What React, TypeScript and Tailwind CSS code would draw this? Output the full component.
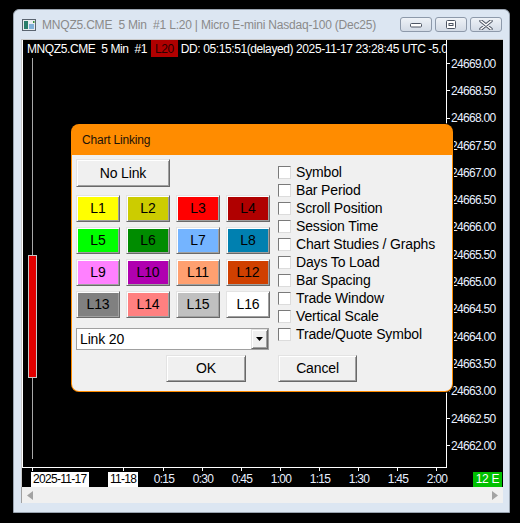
import React from 'react';

const prices = [
  '24669.00', '24668.50', '24668.00', '24667.50', '24667.00',
  '24666.50', '24666.00', '24665.50', '24665.00', '24664.50',
  '24664.00', '24663.50', '24663.00', '24662.50', '24662.00',
];

// tick positions are measured from the chart's left edge
const times = [
  { label: '0:15', x: 141 },
  { label: '0:30', x: 180 },
  { label: '0:45', x: 219 },
  { label: '1:00', x: 258 },
  { label: '1:15', x: 297 },
  { label: '1:30', x: 336 },
  { label: '1:45', x: 375 },
  { label: '2:00', x: 414 },
];

const links = [
  { name: 'L1', bg: 'bg-[#ffff00]' },
  { name: 'L2', bg: 'bg-[#cccc00]' },
  { name: 'L3', bg: 'bg-[#ff0000]' },
  { name: 'L4', bg: 'bg-[#b00000]' },
  { name: 'L5', bg: 'bg-[#00ff00]' },
  { name: 'L6', bg: 'bg-[#008c00]' },
  { name: 'L7', bg: 'bg-[#74b4ff]' },
  { name: 'L8', bg: 'bg-[#0080b0]' },
  { name: 'L9', bg: 'bg-[#ff80ff]' },
  { name: 'L10', bg: 'bg-[#b000b0]' },
  { name: 'L11', bg: 'bg-[#ffa070]' },
  { name: 'L12', bg: 'bg-[#d04000]' },
  { name: 'L13', bg: 'bg-[#808080]' },
  { name: 'L14', bg: 'bg-[#ff8080]' },
  { name: 'L15', bg: 'bg-[#c0c0c0]' },
  { name: 'L16', bg: 'bg-white' },
];

const options = [
  'Symbol', 'Bar Period', 'Scroll Position', 'Session Time', 'Chart Studies / Graphs',
  'Days To Load', 'Bar Spacing', 'Trade Window', 'Vertical Scale', 'Trade/Quote Symbol',
];

const raised =
  'border border-t-[#e3e3e3] border-l-[#e3e3e3] border-r-[#696969] border-b-[#696969] shadow-[inset_1px_1px_0_#fff,inset_-1px_-1px_0_#a0a0a0]';

const WinButton = ({ kind }: { kind: 'min' | 'max' | 'close' }) => (
  <div className="w-[32px] h-[15px] rounded-[3px] border border-[#8d99aa] bg-gradient-to-b from-[#eef2f7] to-[#d3dbe6] flex items-center justify-center">
    {kind === 'min' && (
      <svg width="12" height="6" viewBox="0 0 12 6">
        <rect x="0.5" y="1.5" width="11" height="3.5" rx="1" fill="#fff" stroke="#4d5563" />
      </svg>
    )}
    {kind === 'max' && (
      <svg width="10" height="9" viewBox="0 0 10 9">
        <rect x="0.5" y="0.5" width="9" height="8" rx="1" fill="#fff" stroke="#4d5563" />
        <rect x="2.5" y="3" width="5" height="3" fill="#4d5563" />
        <rect x="3.5" y="4" width="3" height="1" fill="#fff" />
      </svg>
    )}
    {kind === 'close' && (
      <svg width="14" height="10" viewBox="0 0 14 10">
        <path d="M2 1 L12 9 M12 1 L2 9" stroke="#4d5563" strokeWidth="3.4" strokeLinecap="round" />
        <path d="M2 1 L12 9 M12 1 L2 9" stroke="#fff" strokeWidth="1.6" strokeLinecap="round" />
      </svg>
    )}
  </div>
);

const ChartLinkingDialog = () => (
  <div className="absolute left-[71px] top-[124px] w-[382px] h-[268px] rounded-[8px] overflow-hidden flex flex-col bg-[#ff8c00] shadow-[0_0_0_1px_#000]">
    <div className="h-[31px] shrink-0 flex items-center pl-[11px] text-[12px] tracking-[-0.2px] text-[#1c1208]">
      Chart Linking
    </div>
    <div className="flex-1 mx-px mb-px rounded-b-[7px] bg-[#f0f0f0] pl-[4px] pt-[4px] flex flex-col text-[14px] tracking-[-0.15px] text-black">
      <div className="flex">
        <div className="w-[194px] flex flex-col">
          <button className={`w-[94px] h-[28px] bg-[#f0f0f0] ${raised}`}>No Link</button>
          <div className="mt-[8px] grid grid-cols-4 gap-x-[6px] gap-y-[5px]">
            {links.map((l) => (
              <button key={l.name} className={`w-[44px] h-[27px] ${l.bg} ${raised}`}>
                {l.name}
              </button>
            ))}
          </div>
          <div className="mt-[10px] w-[193px] h-[22px] flex bg-white border border-[#a0a0a0]">
            <div className="flex-1 flex items-center pl-[3px]">Link 20</div>
            <div className={`w-[17px] h-full bg-[#f0f0f0] flex items-center justify-center ${raised}`}>
              <svg width="7" height="4" viewBox="0 0 7 4">
                <path d="M0 0 H7 L3.5 4 Z" fill="#000" />
              </svg>
            </div>
          </div>
        </div>
        <div className="ml-[8px] mt-[4px] flex flex-col">
          {options.map((o) => (
            <label key={o} className="h-[18px] flex items-center gap-[5px]">
              <span className="w-[13px] h-[13px] bg-white border border-t-[#7a7a7a] border-l-[#7a7a7a] border-r-[#dcdcdc] border-b-[#dcdcdc]" />
              <span className="whitespace-nowrap">{o}</span>
            </label>
          ))}
        </div>
      </div>
      <div className="mt-[5px] flex">
        <button className={`ml-[90px] w-[80px] h-[27px] bg-[#f0f0f0] ${raised}`}>OK</button>
        <button className={`ml-[32px] w-[79px] h-[27px] bg-[#f0f0f0] ${raised}`}>Cancel</button>
      </div>
    </div>
  </div>
);

const App = () => {
  return (
    <div className="relative w-[520px] h-[523px] bg-black overflow-hidden pl-[13px] pt-[9px] font-['Liberation_Sans',Arial,sans-serif]">
      <div className="w-[497px] h-[504px] bg-[#dce6f2] border border-[#9aa4b0] rounded-t-[6px] flex flex-col">
        {/* title bar */}
        <div className="h-[29px] shrink-0 flex items-center pl-[8px] pr-[7px]">
          <svg width="14" height="12" viewBox="0 0 14 12">
            <rect x="0.5" y="0.5" width="13" height="11" fill="#e9ecef" stroke="#5a6470" />
            <rect x="2" y="2" width="4" height="8" fill="#2a7d6b" />
            <rect x="7" y="5" width="5" height="5" fill="#7fb0d8" />
            <rect x="11" y="2" width="1.5" height="2" fill="#3a8f3a" />
          </svg>
          <span className="ml-[6px] whitespace-pre text-[12px] tracking-[-0.2px] text-[#8a8a8a]">
            MNQZ5.CME  5 Min  #1 L:20 | Micro E-mini Nasdaq-100 (Dec25)
          </span>
          <div className="ml-auto self-start mt-[7px] flex gap-[3px]">
            <WinButton kind="min" />
            <WinButton kind="max" />
            <WinButton kind="close" />
          </div>
        </div>

        {/* client area */}
        <div className="ml-[7px] w-[482px] h-[464px] flex flex-col">
          <div className="relative h-[448px] bg-black border-t border-l border-[#c8c8c8] overflow-hidden text-[12px] tracking-[-0.7px]">
            {/* header line, clipped at the price scale like the original */}
            <div className="absolute left-[5px] top-0 w-[419px] h-[17px] overflow-hidden whitespace-pre flex items-center text-white tracking-[-0.4px]">
              <span>MNQZ5.CME  5 Min  #1 </span>
              <span className="ml-[1px] px-[4px] bg-[#b00000] text-[#2a0000]">L20</span>
              <span className="ml-[3px]">DD: 05:15:51(delayed) 2025-11-17 23:28:45 UTC -5.00</span>
            </div>

            {/* plot frame */}
            <div className="absolute left-0 top-0 w-px h-[428px] bg-white" />
            <div className="absolute left-[424px] top-0 w-px h-[428px] bg-white" />
            <div className="absolute left-0 top-[427px] w-[425px] h-px bg-white" />

            {/* candle */}
            <div className="absolute left-[10px] top-[18px] w-px h-[401px] bg-[#a8a8a8]" />
            <div className="absolute left-[6px] top-[215px] w-[9px] h-[123px] bg-[#e00000] border border-[#c8c8c8]" />

            {/* price scale */}
            <div className="absolute left-[424px] top-[10px] flex flex-col text-[#e8f0ff]">
              {prices.map((p) => (
                <div key={p} className="h-[27.3px] flex items-center">
                  <span className="w-[4px] h-px bg-white" />
                  <span className="ml-[1px]">{p}</span>
                </div>
              ))}
            </div>

            {/* time scale */}
            <div className="absolute left-[10px] top-[427px] w-px h-[4px] bg-white" />
            <div className="absolute left-[101px] top-[427px] w-px h-[4px] bg-white" />
            {times.map((t) => (
              <div key={t.label} className="absolute top-[427px] w-px h-[4px] bg-white" style={{ left: t.x }} />
            ))}
            <div className="absolute left-[9px] top-[432px] h-[15px] px-[2px] bg-white text-black leading-[15px]">2025-11-17</div>
            <div className="absolute left-[86px] top-[432px] h-[15px] px-[2px] bg-white text-black leading-[15px]">11-18</div>
            {times.map((t) => (
              <div
                key={t.label}
                className="absolute top-[432px] h-[15px] leading-[15px] -translate-x-1/2 text-[#e8f0ff]"
                style={{ left: t.x + 1 }}
              >
                {t.label}
              </div>
            ))}
            <div className="absolute left-[451px] top-[432px] w-[29px] h-[15px] leading-[15px] text-center bg-[#00c000] text-white tracking-[-0.3px]">
              12 E
            </div>
          </div>

          {/* scrollbar */}
          <div className="h-[16px] bg-[#f0f0f0] border-l border-[#a0a0a0] flex items-center justify-between px-[5px]">
            <svg width="6" height="9" viewBox="0 0 6 9">
              <path d="M6 0 V9 L0 4.5 Z" fill="#a3a3a3" />
            </svg>
            <svg width="6" height="9" viewBox="0 0 6 9">
              <path d="M0 0 V9 L6 4.5 Z" fill="#a3a3a3" />
            </svg>
          </div>
        </div>
      </div>

      <ChartLinkingDialog />
    </div>
  );
};

export default App;
